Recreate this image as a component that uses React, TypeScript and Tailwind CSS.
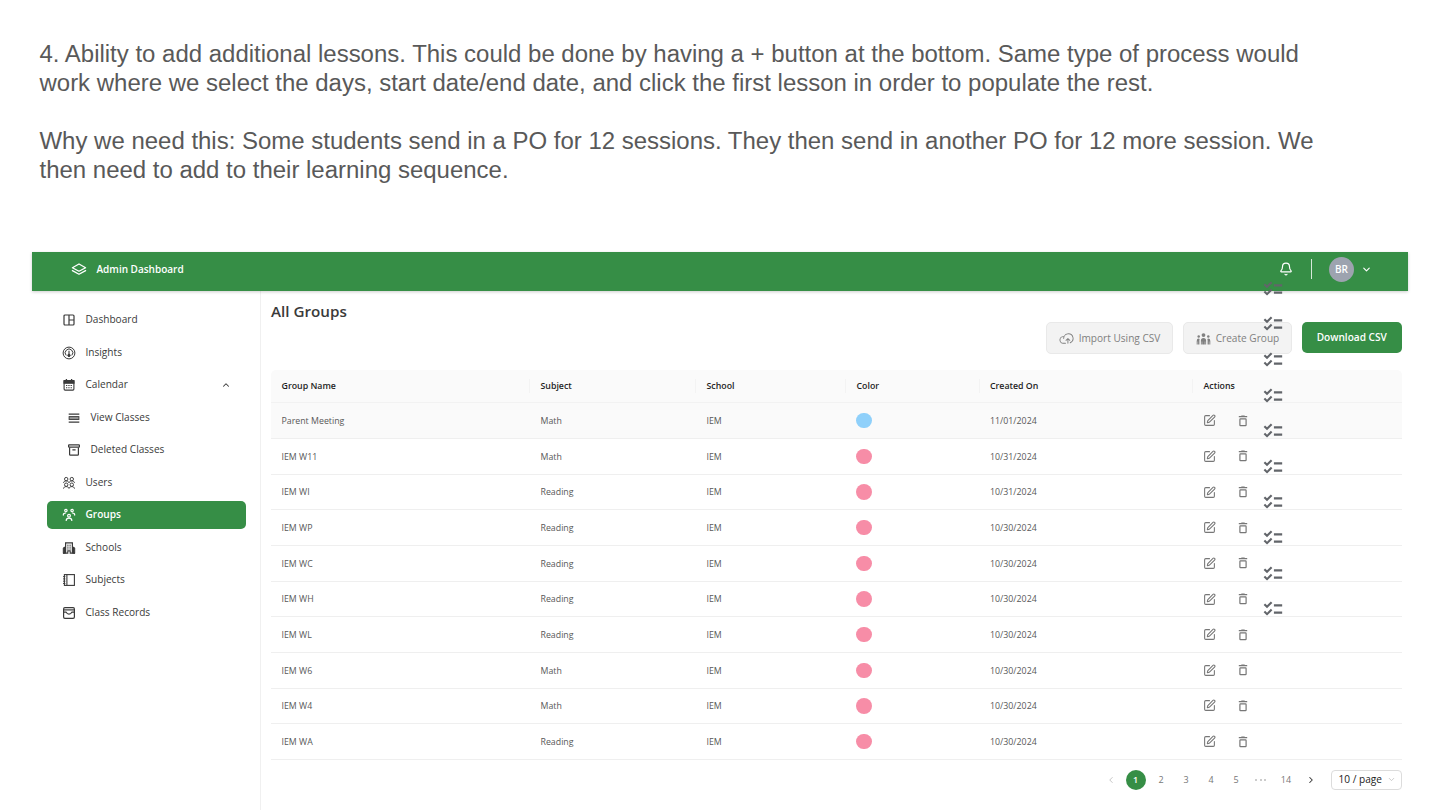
import React from "react";
import { Bell, ChevronDown, ChevronLeft, ChevronRight, ChevronUp, SquarePen } from "lucide-react";
import { PiCloudArrowUp } from "react-icons/pi";

type IconProps = { className?: string };

function LayersIcon() {
  return (
    <svg className="h-[14px] w-4" viewBox="0 0 16 14" fill="none" stroke="currentColor" strokeWidth="1.3" strokeLinejoin="round" strokeLinecap="round">
      <path d="M8 2 14.6 5.7 8 9.2 1.4 5.7Z" />
      <path d="M1.4 8.6 8 12.2l6.6-3.6" />
    </svg>
  );
}

function DashboardIcon({ className }: IconProps) {
  return (
    <svg className={className} viewBox="0 0 14 14" fill="none" stroke="currentColor" strokeWidth="1.2">
      <rect x="2" y="2" width="10" height="10" rx="1" />
      <path d="M7 2v10M7 7h5" />
    </svg>
  );
}

function InsightsIcon({ className }: IconProps) {
  return (
    <svg className={className} viewBox="0 0 14 14" fill="none" stroke="currentColor" strokeWidth="1">
      <circle cx="7" cy="7" r="5.9" />
      <path d="M4.2 9.4a3.8 3.8 0 1 1 5.6 0" />
      <path d="M7 4.8v4" strokeWidth="1.1" />
      <circle cx="7" cy="9.4" r="1.2" fill="currentColor" />
    </svg>
  );
}

function CalendarIcon({ className }: IconProps) {
  return (
    <svg className={className} viewBox="0 0 14 14" fill="none" stroke="currentColor" strokeWidth="1.1">
      <rect x="2.1" y="2.5" width="9.8" height="9.6" rx="1" />
      <path d="M2 2.5h10v2.8H2z" fill="currentColor" />
      <path d="M4.4 1v2M9.6 1v2" strokeWidth="1.3" />
      <path d="M4 7.5h6M4 9.7h6" strokeDasharray="1.3 1" />
    </svg>
  );
}

function RowsIcon({ className }: IconProps) {
  return (
    <svg className={className} viewBox="0 0 14 14" fill="none" stroke="currentColor">
      <path d="M1.7 3.1h10.6M1.7 11.1h10.6" strokeWidth="1.1" />
      <rect x="2.1" y="5.6" width="9.8" height="2.9" fill="currentColor" fillOpacity=".55" strokeWidth=".9" />
    </svg>
  );
}

function ArchiveIcon({ className }: IconProps) {
  return (
    <svg className={className} viewBox="0 0 14 14" fill="none" stroke="currentColor" strokeWidth="1.2" strokeLinejoin="round">
      <rect x="1.6" y="1.8" width="10.8" height="2.4" rx=".5" />
      <path d="M2.6 4.4v7q0 .8.8.8h7.2q.8 0 .8-.8v-7M5.4 6.8h3.2" />
    </svg>
  );
}

function UsersIcon({ className }: IconProps) {
  return (
    <svg className={className} viewBox="0 0 14 14" fill="none" stroke="currentColor" strokeWidth=".95">
      <circle cx="4.2" cy="3.1" r="1.7" />
      <circle cx="9.8" cy="3.1" r="1.7" />
      <circle cx="4.2" cy="8.7" r="1.7" />
      <circle cx="9.8" cy="8.7" r="1.7" />
      <path d="M1.5 6.9c.2-1.3 1.2-2 2.7-2s2.4.7 2.8 1.8c.4-1.1 1.3-1.8 2.8-1.8s2.5.7 2.7 2M1.5 12.6c.2-1.3 1.2-2 2.7-2s2.4.7 2.8 1.8c.4-1.1 1.3-1.8 2.8-1.8s2.5.7 2.7 2" />
    </svg>
  );
}

function GroupsIcon({ className }: IconProps) {
  return (
    <svg className={className} viewBox="0 0 14 14" fill="none" stroke="currentColor" strokeWidth="1.2" strokeLinecap="round">
      <circle cx="3.9" cy="2.6" r="1.2" />
      <circle cx="10.1" cy="2.6" r="1.2" />
      <circle cx="7" cy="7.7" r="1.4" />
      <path d="M1.3 7.1c0-1.4.9-2.1 2.3-2.1M12.7 7.1c0-1.4-.9-2.1-2.3-2.1" />
      <path d="M4.2 12.5c0-1.5 1-2.3 2.8-2.3s2.8.8 2.8 2.3" />
    </svg>
  );
}

function SchoolsIcon({ className }: IconProps) {
  return (
    <svg className={className} viewBox="0 0 14 14" fill="none" stroke="currentColor">
      <path d="M1.1 12.4V7l1-1H3.2v6.4zM12.9 12.4V7l-1-1H10.8v6.4z" fill="currentColor" strokeWidth=".5" />
      <path d="M3.6 12.3V1.9h6.8v10.4" strokeWidth="1.2" />
      <path d="M5.2 4.2h3.6M5.2 6.1h3.6M5.2 8h3.6" strokeDasharray="1.4 .8" />
      <path d="M1 12.1h4.8V9.9h2.4v2.2H13" strokeWidth="1.1" />
    </svg>
  );
}

function SubjectsIcon({ className }: IconProps) {
  return (
    <svg className={className} viewBox="0 0 14 14" fill="none" stroke="currentColor" strokeWidth="1.1">
      <rect x="2.4" y="1.6" width="10" height="10.8" />
      <path d="M4.9 1.6v10.8" />
      <path d="M1 3.6h2.4M1 5.9h2.4M1 8.2h2.4M1 10.5h2.4" strokeWidth=".9" />
    </svg>
  );
}

function RecordsIcon({ className }: IconProps) {
  return (
    <svg className={className} viewBox="0 0 14 14" fill="none" stroke="currentColor" strokeWidth="1.2" strokeLinejoin="round">
      <rect x="1.6" y="1.6" width="10.8" height="10.8" rx="1.3" />
      <path d="M1.6 3.9h10.8" />
      <path d="M1.6 6.1h2.6q.8 2 2.8 2t2.8-2h2.6" />
    </svg>
  );
}

function CreateGroupIcon() {
  return (
    <svg className="h-[14px] w-[15px]" viewBox="0 0 15 14" fill="currentColor">
      <circle cx="7.5" cy="3.1" r="1.9" />
      <circle cx="2.7" cy="4.5" r="1.25" />
      <circle cx="12.3" cy="4.5" r="1.25" />
      <path d="M4.9 12.6V8.6q0-2.7 2.6-2.7t2.6 2.7v4H9.2V9.4h-.4v3.2H6.2V9.4h-.4v3.2z" />
      <path d="M.7 12.6V8.9q0-2.3 2-2.3.6 0 1 .3-.3.9-.3 1.7v4H2.1V9.6h-.4v3zM14.3 12.6V8.9q0-2.3-2-2.3-.6 0-1 .3.3.9.3 1.7v4h1.3V9.6h.4v3z" />
    </svg>
  );
}

function TrashIcon({ className }: IconProps) {
  return (
    <svg className={className} viewBox="0 0 14 14" fill="none" stroke="currentColor" strokeWidth="1.2">
      <path d="M2.8 2.7h8.4M5.3 2h3.4" />
      <rect x="3.9" y="4.9" width="6.2" height="6.7" rx=".6" />
    </svg>
  );
}

function ChecklistIcon() {
  return (
    <svg className="size-[22px]" viewBox="0 0 24 24" fill="none" stroke="currentColor" strokeWidth="2.3">
      <path d="M13 8h9M13 16h9" />
      <path d="m2.600 6.700 2.900 2.900 5-5M2.600 14.700l2.900 2.900 5-5" />
    </svg>
  );
}

type NavItem = {
  label: string;
  Icon: React.ComponentType<IconProps>;
  sub?: boolean;
  active?: boolean;
  open?: boolean;
};

const nav: NavItem[] = [
  { label: "Dashboard", Icon: DashboardIcon },
  { label: "Insights", Icon: InsightsIcon },
  { label: "Calendar", Icon: CalendarIcon, open: true },
  { label: "View Classes", Icon: RowsIcon, sub: true },
  { label: "Deleted Classes", Icon: ArchiveIcon, sub: true },
  { label: "Users", Icon: UsersIcon },
  { label: "Groups", Icon: GroupsIcon, active: true },
  { label: "Schools", Icon: SchoolsIcon },
  { label: "Subjects", Icon: SubjectsIcon },
  { label: "Class Records", Icon: RecordsIcon },
];

const groups = [
  ["Parent Meeting", "Math", "11/01/2024"],
  ["IEM W11", "Math", "10/31/2024"],
  ["IEM WI", "Reading", "10/31/2024"],
  ["IEM WP", "Reading", "10/30/2024"],
  ["IEM WC", "Reading", "10/30/2024"],
  ["IEM WH", "Reading", "10/30/2024"],
  ["IEM WL", "Reading", "10/30/2024"],
  ["IEM W6", "Math", "10/30/2024"],
  ["IEM W4", "Math", "10/30/2024"],
  ["IEM WA", "Reading", "10/30/2024"],
];

const columns = ["Group Name", "Subject", "School", "Color", "Created On", "Actions"];
const gridCols = "grid grid-cols-[259px_166px_150px_133.5px_213.5px_1fr] items-center";

function Header() {
  return (
    <header className="relative z-10 flex h-[38.5px] items-center bg-[#368e46] pb-[4px] pl-[39px] pr-[36px] text-white shadow-[0_1px_3px_rgba(0,0,0,0.2)]">
      <LayersIcon />
      <span className="ml-[9.5px] text-[10px] font-semibold">Admin Dashboard</span>
      <div className="ml-auto flex items-center">
        <Bell className="size-[14px]" strokeWidth={2} />
        <span className="ml-[18px] h-[20px] w-px bg-white/80" />
        <span className="ml-[17px] flex size-[25px] items-center justify-center rounded-full bg-[#9da3af] text-[10px] font-semibold">BR</span>
        <ChevronDown className="ml-[7px] size-[11px]" strokeWidth={2.5} />
      </div>
    </header>
  );
}

function Sidebar() {
  return (
    <nav className="flex w-[229px] shrink-0 flex-col gap-[5px] border-r border-[#f0f0f0] pl-[15px] pt-[15.5px] text-[10.1px] text-[#3a3a3a]">
      {nav.map(({ label, Icon, sub, active, open }) => (
        <div
          key={label}
          className={`flex h-[27.5px] w-[198.5px] shrink-0 items-center rounded-[5px] pt-[0.5px] ${sub ? "pl-[19.5px]" : "pl-[14.5px]"} ${active ? "bg-[#368e46] font-semibold text-white" : ""}`}
        >
          <Icon className="size-[14px]" />
          <span className="ml-[10px]">{label}</span>
          {open && <ChevronUp className="ml-auto mr-[15px] size-[10px]" strokeWidth={2.5} />}
        </div>
      ))}
    </nav>
  );
}

function GroupsTable() {
  return (
    <div className="mt-4 text-[8.8px] text-[#585858]">
      <div className={`${gridCols} h-[33.4px] rounded-t-[5px] border-b border-[#f2f2f2] bg-[#fafafa] font-semibold text-[#1f1f1f]`}>
        {columns.map((c, i) => (
          <div key={c} className={`flex h-[14px] items-center pl-[10.5px] ${i < 5 ? "border-r border-[#f3f3f3]" : ""}`}>
            {c}
          </div>
        ))}
      </div>
      {groups.map(([name, subject, date], i) => (
        <div key={name} className={`${gridCols} h-[35.67px] border-b border-[#efefef] ${i === 0 ? "bg-[#fafafa]" : ""}`}>
          <span className="pl-[10.5px] pt-[1.8px]">{name}</span>
          <span className="pl-[10.5px] pt-[1.8px]">{subject}</span>
          <span className="pl-[10.5px] pt-[1.8px]">IEM</span>
          <span className="pl-[10px]">
            <span className={`block size-[15.5px] rounded-full ${i === 0 ? "bg-[#8fd0fa]" : "bg-[#f78da7]"}`} />
          </span>
          <span className="pl-[10.5px] pt-[1.8px]">{date}</span>
          <span className="flex items-center pl-[10px] text-[#777]">
            <SquarePen className="size-[13px]" strokeWidth={2} />
            <TrashIcon className="ml-5 size-[14px]" />
          </span>
        </div>
      ))}
    </div>
  );
}

function Pagination() {
  return (
    <div className="mt-[10px] flex items-center justify-end gap-[5px] text-[9px] text-[#777]">
      <span className="flex w-5 justify-center"><ChevronLeft className="size-[10px] text-[#bbb]" /></span>
      <span className="flex size-5 items-center justify-center rounded-full bg-[#368e46] font-semibold text-white">1</span>
      {["2", "3", "4", "5"].map((p) => (
        <span key={p} className="w-5 pl-px text-center">{p}</span>
      ))}
      <span className="flex w-5 justify-center gap-[2.5px]">
        <i className="size-[2px] rounded-full bg-[#bbb]" />
        <i className="size-[2px] rounded-full bg-[#bbb]" />
        <i className="size-[2px] rounded-full bg-[#bbb]" />
      </span>
      <span className="w-5 pl-px text-center">14</span>
      <span className="flex w-5 justify-center"><ChevronRight className="size-[10px] text-[#333]" strokeWidth={2.5} /></span>
      <div className="ml-[5px] flex h-5 w-[71px] items-center justify-between rounded-[4px] border border-[#dcdcdc] pl-[7px] pr-[5px] text-[10.1px] text-[#222]">
        <span className="whitespace-nowrap">10 / page</span>
        <ChevronDown className="size-[9px] text-[#bbb]" />
      </div>
    </div>
  );
}

export default function App() {
  return (
    <div className="h-[810px] w-[1440px] overflow-hidden bg-white px-8 pt-[39px] font-['Open_Sans',sans-serif]">
      <div className="h-[213px] whitespace-pre pl-[7.5px] font-['Liberation_Sans',Arial,sans-serif] text-[23.98px] leading-[29px] text-[#595959]">
        <p>4. Ability to add additional lessons. This could be done by having a + button at the bottom. Same type of process would</p>
        <p>work where we select the days, start date/end date, and click the first lesson in order to populate the rest.</p>
        <p className="mt-[29px]">Why we need this: Some students send in a PO for 12 sessions. They then send in another PO for 12 more session. We</p>
        <p>then need to add to their learning sequence.</p>
      </div>
      <div className="relative h-[558px]">
        <Header />
        <div className="flex h-[520px]">
          <Sidebar />
          <main className="w-[1140.5px] pl-[10px] pt-[10px]">
            <h1 className="h-[21.5px] text-[15.2px] font-semibold leading-5 text-[#3a3a3a]">All Groups</h1>
            <div className="flex items-start justify-end gap-[10px] text-[10.1px] text-[#808080]">
              <div className="flex h-8 w-[127px] items-center justify-center gap-[5px] rounded-[5px] border border-[#e9e9e9] bg-[#f3f3f3] pt-[1.5px]">
                <PiCloudArrowUp className="size-[15px]" />
                Import Using CSV
              </div>
              <div className="flex h-8 w-[109px] items-center justify-center gap-[5px] rounded-[5px] border border-[#e9e9e9] bg-[#f3f3f3] pt-[1.5px]">
                <CreateGroupIcon />
                Create Group
              </div>
              <div className="flex h-[31px] w-[99.5px] items-center justify-center rounded-[5px] bg-[#368e46] pt-px font-semibold text-white">Download CSV</div>
            </div>
            <GroupsTable />
            <Pagination />
          </main>
        </div>
        <div className="absolute left-[1230px] top-[25.8px] z-20 flex flex-col gap-[13.6px] text-[#62656a]">
          {groups.map(([name]) => (
            <ChecklistIcon key={name} />
          ))}
        </div>
      </div>
    </div>
  );
}
